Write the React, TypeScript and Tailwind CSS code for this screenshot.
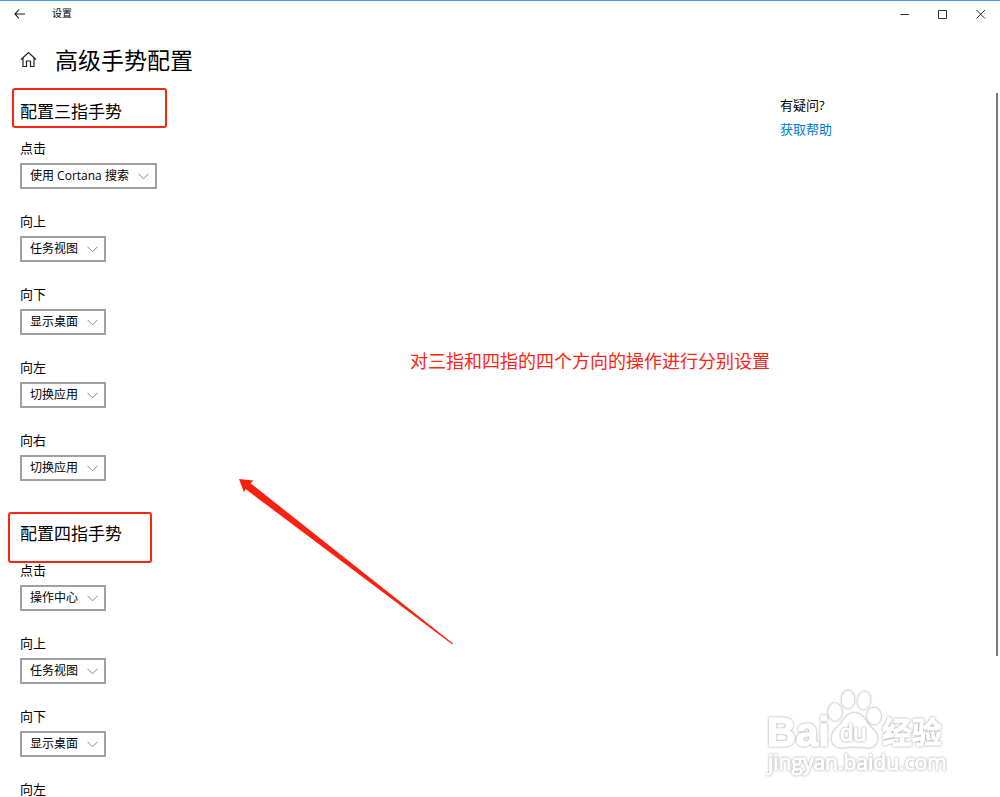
import { useId } from 'react';

interface Gesture {
  label: string;
  value: string;
}

interface GestureSectionProps {
  title: string;
  gestures: Gesture[];
  highlightClass: string;
}

const actions = ['使用 Cortana 搜索', '操作中心', '任务视图', '显示桌面', '切换应用'];

const threeFinger: Gesture[] = [
  { label: '点击', value: '使用 Cortana 搜索' },
  { label: '向上', value: '任务视图' },
  { label: '向下', value: '显示桌面' },
  { label: '向左', value: '切换应用' },
  { label: '向右', value: '切换应用' },
];

const fourFinger: Gesture[] = [
  { label: '点击', value: '操作中心' },
  { label: '向上', value: '任务视图' },
  { label: '向下', value: '显示桌面' },
  { label: '向左', value: '切换应用' },
  { label: '向右', value: '切换应用' },
];

function GestureSelect({ label, value }: Gesture) {
  const id = useId();

  return (
    <div className="flex flex-col items-start gap-[5px]">
      <label htmlFor={id} className="text-[13px] leading-5">
        {label}
      </label>
      <div className="relative">
        <select
          id={id}
          defaultValue={value}
          className="field-sizing-content block h-[26px] appearance-none border-2 border-[#a0a0a0] bg-white pl-2 pr-[26px] text-xs leading-5"
        >
          {actions.map((action) => (
            <option key={action}>{action}</option>
          ))}
        </select>
        <svg
          className="pointer-events-none absolute right-2 top-[10px]"
          width="11"
          height="7"
          viewBox="0 0 11 7"
          fill="none"
          stroke="#888"
        >
          <path d="M0.5 0.8 5.5 5.8 10.5 0.8" />
        </svg>
      </div>
    </div>
  );
}

function GestureSection({ title, gestures, highlightClass }: GestureSectionProps) {
  return (
    <section>
      <div className="relative mb-[14px]">
        <h2 className="text-[17px] leading-6">{title}</h2>
        <div className={`pointer-events-none absolute rounded-[3px] border-2 border-[#fc2414] ${highlightClass}`} />
      </div>
      <div className="flex flex-col gap-[22px]">
        {gestures.map((gesture) => (
          <GestureSelect key={gesture.label} {...gesture} />
        ))}
      </div>
    </section>
  );
}

function TitleBar() {
  return (
    <header className="flex h-[26px] shrink-0 items-center border-t border-[#4a9be0]">
      <button aria-label="返回" className="flex h-full w-10 items-center justify-center">
        <svg width="12" height="10" viewBox="0 0 12 10" fill="none" stroke="#222" strokeWidth="1.1">
          <path d="M5 0.7 0.9 5 5 9.3M0.9 5H11" />
        </svg>
      </button>
      <span className="ml-3 text-[10px]">设置</span>
      <div className="ml-auto flex h-full">
        <button aria-label="最小化" className="flex w-[38px] items-center justify-center">
          <svg width="10" height="10" viewBox="0 0 10 10" stroke="#333">
            <path d="M0.5 5.5H9" />
          </svg>
        </button>
        <button aria-label="最大化" className="flex w-[38px] items-center justify-center">
          <svg width="10" height="10" viewBox="0 0 10 10" fill="none" stroke="#333">
            <path d="M0.5 1.5H8.5V9.5H0.5Z" />
          </svg>
        </button>
        <button aria-label="关闭" className="flex w-[38px] items-center justify-center">
          <svg width="10" height="10" viewBox="0 0 10 10" stroke="#333">
            <path d="M0.5 1 9 9.5M9 1 0.5 9.5" />
          </svg>
        </button>
      </div>
    </header>
  );
}

function Arrow() {
  return (
    <svg
      className="pointer-events-none absolute left-[238px] top-[478px]"
      width="216"
      height="168"
      viewBox="0 0 216 168"
      fill="#fc2010"
    >
      <path d="M1 1 15.5 2.5 12.5 5.2 215 165.5 214 166.3 7.5 11 6 14.5Z" />
    </svg>
  );
}

function Watermark() {
  return (
    <svg
      className="pointer-events-none absolute bottom-[17px] right-10 [&_ellipse]:drop-shadow-[0_0_1px_#888] [&_path]:drop-shadow-[0_0_1px_#888] [&_text]:drop-shadow-[0_0_1px_#999]"
      width="200"
      height="100"
      viewBox="0 0 200 100"
      fill="white"
      stroke="white"
      strokeWidth="1.5"
      strokeLinejoin="round"
    >
      <text x="7" y="66" fontSize="40" fontWeight="bold" fontFamily="Liberation Sans, sans-serif">
        Bai
      </text>
      <text x="122" y="63" fontSize="30" fontWeight="bold" fontFamily="Noto Sans CJK SC, sans-serif" strokeWidth="1">
        经验
      </text>
      <text x="8" y="90" fontSize="21" fontFamily="Open Sans, sans-serif" strokeWidth="1">
        jingyan.baidu.com
      </text>
      <g strokeWidth="1">
        <ellipse cx="75" cy="32" rx="6.5" ry="8.5" />
        <ellipse cx="88" cy="19.5" rx="6" ry="8.5" />
        <ellipse cx="104" cy="20.5" rx="6" ry="8.5" transform="rotate(10 104 20.5)" />
        <ellipse cx="114" cy="36" rx="6.5" ry="8" />
        <path d="M94 33.5C101 33.5 104 38 107 43C110 48 117 51 117 59C117 65 112 68 106 67C98 66 92 66 84 67C76 68 72 64 72 58C72 51 79 47 82 43C85 38 88 33.5 94 33.5Z" />
      </g>
      <text x="80" y="61" fontSize="24" fontFamily="Liberation Sans, sans-serif" strokeWidth="1">
        du
      </text>
    </svg>
  );
}

export default function App() {
  return (
    <div className="relative flex h-screen flex-col overflow-hidden bg-white font-['Open_Sans','Noto_Sans_CJK_SC',sans-serif] text-black">
      <TitleBar />

      <div className="flex h-[67px] shrink-0 items-center gap-[18px] px-5">
        <svg width="17" height="17" viewBox="0 0 17 17" fill="none" stroke="#222" strokeWidth="1.2">
          <path d="M1 8.5 8.5 1.5 16 8.5M3 7V15.5H6.5V10H10.5V15.5H14V7" />
        </svg>
        <h1 className="text-[23px] leading-8">高级手势配置</h1>
      </div>

      <div className="flex min-h-0 flex-1">
        <main className="flex flex-1 flex-col gap-[41px] px-5 pt-[7px]">
          <GestureSection
            title="配置三指手势"
            gestures={threeFinger}
            highlightClass="-left-2 -top-3 h-10 w-[155px]"
          />
          <GestureSection
            title="配置四指手势"
            gestures={fourFinger}
            highlightClass="-left-3 -top-[10px] h-[51px] w-36"
          />
        </main>
        <aside className="w-[216px] shrink-0 text-[13px]">
          <p className="leading-6">有疑问?</p>
          <a href="#help" className="block leading-6 text-[#0078d7]">
            获取帮助
          </a>
        </aside>
        <div className="mr-[2px] h-4/5 w-[2px] bg-[#777]" />
      </div>

      {/* Annotations */}
      <p className="pointer-events-none absolute left-[410px] top-[349px] text-[18px] leading-6 text-[#fc2414]">
        对三指和四指的四个方向的操作进行分别设置
      </p>
      <Arrow />
      <Watermark />
    </div>
  );
}
